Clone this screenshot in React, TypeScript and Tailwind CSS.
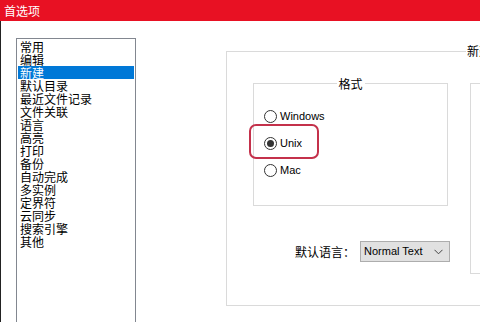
const cjk = { fontFamily: '"Noto Sans CJK SC", "Noto Sans", sans-serif' };
const latin = { fontFamily: '"Liberation Sans", Arial, sans-serif' };

const items = [
  '常用',
  '编辑',
  '新建',
  '默认目录',
  '最近文件记录',
  '文件关联',
  '语言',
  '高亮',
  '打印',
  '备份',
  '自动完成',
  '多实例',
  '定界符',
  '云同步',
  '搜索引擎',
  '其他',
];

const Radio = ({ label, checked }: { label: string; checked?: boolean }) => (
  <div className="flex h-[13px] items-center gap-[3px]">
    <span className="flex h-[13px] w-[13px] items-center justify-center rounded-full border border-[#333] bg-white">
      {checked && <span className="h-[7px] w-[7px] rounded-full bg-[#333]" />}
    </span>
    <span className="text-[11px] leading-[13px] text-black" style={latin}>
      {label}
    </span>
  </div>
);

export default function App() {
  return (
    <div className="h-[322px] w-[480px] overflow-hidden bg-white" style={cjk}>
      {/* Title bar */}
      <div className="flex h-[21px] items-center bg-[#e81123] pl-[4px] text-[12px] text-white">
        首选项
      </div>

      <div className="flex h-[301px] border-l border-[#222]">
        {/* Category list */}
        <div className="ml-[15px] mt-[17px] h-[300px] w-[120px] shrink-0 border border-[#828790] p-[1px]">
          {items.map((item) => (
            <div
              key={item}
              className={
                'h-[13px] pl-[2px] text-[12px] leading-[13px] ' +
                (item === '新建' ? 'bg-[#0078d7] text-white' : 'text-black')
              }
            >
              {item}
            </div>
          ))}
        </div>

        {/* Outer group */}
        <div className="relative ml-[90px] mt-[30px] h-[255px] w-[330px] shrink-0 border border-[#dadada]">
          <span className="absolute left-[239px] top-[-8px] bg-white px-[1px] text-[12px] leading-[14px] text-black">
            新建
          </span>

          <div className="flex pl-[26px] pt-[31px]">
            <div className="flex w-[195px] shrink-0 flex-col">
              {/* Format group */}
              <div className="relative h-[123px] border border-[#dadada]">
                <span className="absolute left-1/2 top-[-7px] -translate-x-1/2 bg-white px-[2px] text-[12px] leading-[13px] text-black">
                  格式
                </span>
                <div className="flex flex-col gap-[14px] pl-[10px] pt-[26px]">
                  <Radio label="Windows" />
                  <Radio label="Unix" checked />
                  <Radio label="Mac" />
                </div>
                <div className="absolute left-[-5px] top-[40px] h-[35px] w-[70px] rounded-[7px] border-2 border-[#c4314b]" />
              </div>

              {/* Default language */}
              <div className="mt-[35px] flex items-center justify-end pr-[-2px]">
                <span className="mr-[5px] text-[12px] leading-[13px] text-black">默认语言：</span>
                <div className="mr-[-2px] flex h-[21px] w-[90px] items-center justify-between border border-[#adadad] bg-[#e1e1e1] pl-[3px] pr-[6px]">
                  <span className="text-[11px] text-black" style={latin}>
                    Normal Text
                  </span>
                  <svg width="9" height="6" viewBox="0 0 9 6" fill="none">
                    <path d="M0.5 0.8 L4.5 4.8 L8.5 0.8" stroke="#444" strokeWidth="1" />
                  </svg>
                </div>
              </div>
            </div>

            {/* Right group */}
            <div className="ml-[22px] h-[191px] w-[60px] shrink-0 border border-[#dadada]" />
          </div>
        </div>
      </div>
    </div>
  );
}
